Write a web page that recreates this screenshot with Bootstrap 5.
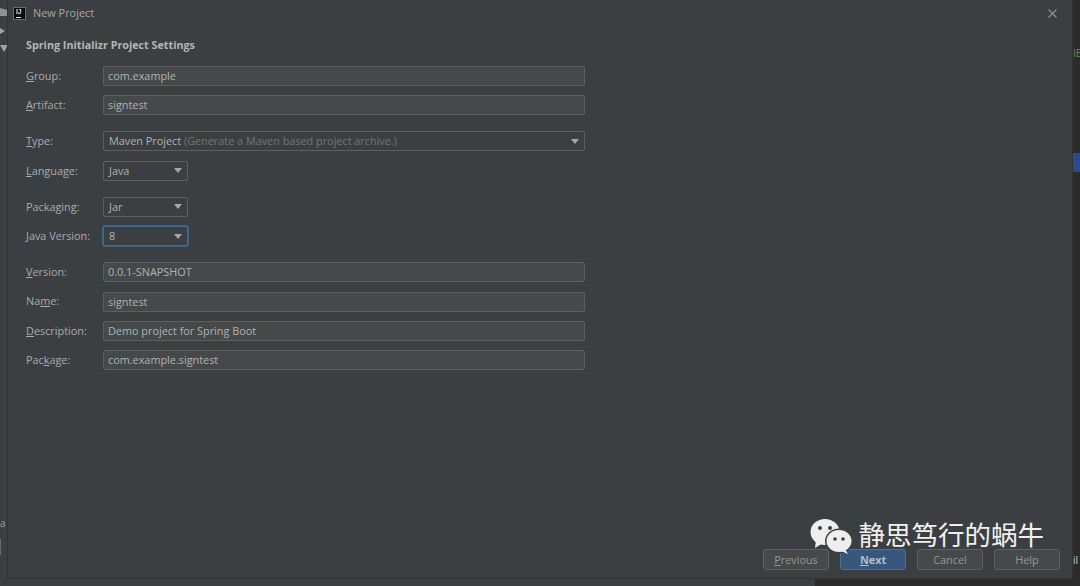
<!DOCTYPE html>
<html lang="en">
<head>
<meta charset="utf-8">
<title>New Project</title>
<link href="https://cdn.jsdelivr.net/npm/bootstrap@5.3.0/dist/css/bootstrap.min.css" rel="stylesheet">
<style>
html, body { height: 100%; }
body { background: #3c3f41; font-family: "Open Sans", "Noto Sans", sans-serif; font-size: 10.85px; color: #a9abac; overflow: hidden; }
.ide-frame { width: 1080px; height: 586px; }
.ide-left { width: 7px; background: #3c3f41; overflow: hidden; position: relative; }
.ide-right { width: 7px; background: #2b2b2b; overflow: hidden; }
.ide-left-icon { width: 7px; height: 8px; background: #8f9396; margin-top: 8px; clip-path: polygon(0 0, 100% 25%, 100% 100%, 0 100%); }
.ide-left-arrow { width: 0; height: 0; margin-top: 12px; border-left: 5px solid #a0a2a4; border-top: 3px solid transparent; border-bottom: 3px solid transparent; }
.ide-left-down { width: 0; height: 0; margin-top: 11px; border-top: 7px solid #a0a2a4; border-left: 4px solid transparent; border-right: 4px solid transparent; }
.ide-left-a { color: #9a9c9e; font-size: 10px; line-height: 12px; margin-top: 465px; }
.ide-left-bar { width: 1px; height: 16px; background: #6a6c6e; margin-top: 10px; }
.ide-right-e { color: #6a8759; font-size: 10px; line-height: 12px; margin-top: 47px; }
.ide-right-tint { height: 19px; margin-top: 94px; background: #2a4a8e; }
.ide-right-il { color: #c9cbcc; font-size: 10px; line-height: 12px; margin-top: 382px; }
.ide-footer-strip { height: 7px; background: #3c3f41; }
.ide-footer-dark { width: 265px; background: #2b2b2b; }
.dlg { background: #3c3f41; border-left: 1px solid #323232; border-right: 1px solid #323232; border-bottom: 1px solid #323232; }
.dlg-title { height: 26px; padding: 1px 15px 0 5px; color: #a6a8a9; gap: 7px; font-size: 10.9px; }
.dlg-logo { width: 13px; height: 13px; margin-top: -1px; background: #0a0a0a; border: 1px solid #2f78c8; color: #e8e8e8; font: bold 6.5px/7px "Liberation Sans", sans-serif; padding-left: 2px; position: relative; }
.dlg-logo::after { content: ""; position: absolute; left: 2px; bottom: 1px; width: 5px; height: 1px; background: #e8e8e8; }
.dlg-body { padding: 12px 0 0 18px; }
.dlg-heading { font-weight: 700; font-size: 10.75px; line-height: 14px; margin-bottom: 14px; color: #b4b6b7; }
.frow { height: 20px; margin-bottom: 9.4px; }
.frow.gap-after { margin-bottom: 16px; }
.flabel { width: 77px; flex: none; }
.flabel u { text-underline-offset: 1px; }
.ftext { width: 482px; height: 20px; background: #45494a; border: 1px solid #5e6060; border-radius: 2px; padding: 0 4px; line-height: 18px; color: #b0b2b3; }
.fcombo { height: 20px; background: #3c3f41; border: 1px solid #5e6060; border-radius: 2px; padding: 0 4px 0 5px; line-height: 18px; color: #b0b2b3; }
.fcombo.wide { width: 482px; }
.fcombo.short { width: 85px; }
.fcombo.focused { border-color: #3d6b99; box-shadow: 0 0 0 1px #3d6185; }
.fcombo .hint { color: #727577; }
.caret-down { width: 0; height: 0; border-top: 5px solid #a5a7a8; border-left: 4.5px solid transparent; border-right: 4.5px solid transparent; margin-right: 1px; }
.dlg-footer { padding: 0 12px 8px 0; gap: 11px; position: relative; }
.dbtn { width: 66px; height: 21px; padding: 0; border: 1px solid #5e6060; border-radius: 3px; background: #45494a; color: #96989a; font-size: 10.85px; line-height: 19px; }
.dbtn.main { background: #365880; border-color: #4c708c; color: #bbbcbd; font-weight: 700; }
.dlg-spacer { flex: 1 1 auto; }
.mark-wm { position: absolute; right: 28px; bottom: 24px; color: #f0f0f0; font-family: "Liberation Sans", "Noto Sans CJK SC", sans-serif; font-size: 26.5px; line-height: 30px; gap: 6px; }
.dlg-x { width: 9px; height: 9px; }
</style>
</head>
<body>
<div class="ide-frame d-flex flex-column">
  <div class="d-flex flex-grow-1" style="min-height:0">
    <div class="ide-left flex-none d-flex flex-column">
      <div class="ide-left-icon"></div>
      <div class="ide-left-arrow"></div>
      <div class="ide-left-down"></div>
      <div class="ide-left-a">a</div>
      <div class="ide-left-bar"></div>
    </div>
    <div class="dlg flex-grow-1 d-flex flex-column">
      <div class="dlg-title d-flex align-items-center">
        <div class="dlg-logo">IJ</div>
        <span>New Project</span>
        <svg class="dlg-x ms-auto" viewBox="0 0 9 9"><path d="M.5.5l8 8M8.5.5l-8 8" stroke="#8f9193" stroke-width="1.1" fill="none"/></svg>
      </div>
      <div class="dlg-body">
        <div class="dlg-heading">Spring Initializr Project Settings</div>
        <div class="frow d-flex align-items-center"><div class="flabel"><u>G</u>roup:</div><div class="ftext">com.example</div></div>
        <div class="frow gap-after d-flex align-items-center"><div class="flabel"><u>A</u>rtifact:</div><div class="ftext">signtest</div></div>
        <div class="frow d-flex align-items-center"><div class="flabel"><u>T</u>ype:</div><div class="fcombo wide d-flex align-items-center justify-content-between"><span>Maven Project <span class="hint">(Generate a Maven based project archive.)</span></span><i class="caret-down"></i></div></div>
        <div class="frow gap-after d-flex align-items-center"><div class="flabel"><u>L</u>anguage:</div><div class="fcombo short d-flex align-items-center justify-content-between"><span>Java</span><i class="caret-down"></i></div></div>
        <div class="frow d-flex align-items-center"><div class="flabel">Packa<u>g</u>ing:</div><div class="fcombo short d-flex align-items-center justify-content-between"><span>Jar</span><i class="caret-down"></i></div></div>
        <div class="frow gap-after d-flex align-items-center"><div class="flabel"><u>J</u>ava Version:</div><div class="fcombo short focused d-flex align-items-center justify-content-between"><span>8</span><i class="caret-down"></i></div></div>
        <div class="frow d-flex align-items-center"><div class="flabel"><u>V</u>ersion:</div><div class="ftext">0.0.1-SNAPSHOT</div></div>
        <div class="frow d-flex align-items-center"><div class="flabel">Na<u>m</u>e:</div><div class="ftext">signtest</div></div>
        <div class="frow d-flex align-items-center"><div class="flabel"><u>D</u>escription:</div><div class="ftext">Demo project for Spring Boot</div></div>
        <div class="frow d-flex align-items-center"><div class="flabel">Pac<u>k</u>age:</div><div class="ftext">com.example.signtest</div></div>
      </div>
      <div class="dlg-spacer"></div>
      <div class="dlg-footer d-flex justify-content-end">
        <div class="mark-wm d-flex align-items-center">
          <svg width="43" height="36" viewBox="0 0 43 36"><ellipse cx="15" cy="14" rx="14.5" ry="13" fill="#eeeeee"/><path d="M6 22l-1 8 8-5z" fill="#eeeeee"/><circle cx="10" cy="10" r="2" fill="#3c3f41"/><circle cx="20" cy="10" r="2" fill="#3c3f41"/><ellipse cx="29" cy="23" rx="14" ry="12.5" fill="#3c3f41"/><ellipse cx="29" cy="23" rx="12.5" ry="11" fill="#eeeeee"/><path d="M35 31l3 5-7-3z" fill="#eeeeee"/><circle cx="25" cy="21" r="1.8" fill="#3c3f41"/><circle cx="33" cy="21" r="1.8" fill="#3c3f41"/></svg>
          <span>静思笃行的蜗牛</span>
        </div>
        <button type="button" class="dbtn"><u>P</u>revious</button>
        <button type="button" class="dbtn main"><u>N</u>ext</button>
        <button type="button" class="dbtn">Cancel</button>
        <button type="button" class="dbtn">Help</button>
      </div>
    </div>
    <div class="ide-right flex-none">
      <div class="ide-right-e">IE</div>
      <div class="ide-right-tint"></div>
      <div class="ide-right-il">il</div>
    </div>
  </div>
  <div class="ide-footer-strip d-flex justify-content-end"><div class="ide-footer-dark"></div></div>
</div>
</body>
</html>
